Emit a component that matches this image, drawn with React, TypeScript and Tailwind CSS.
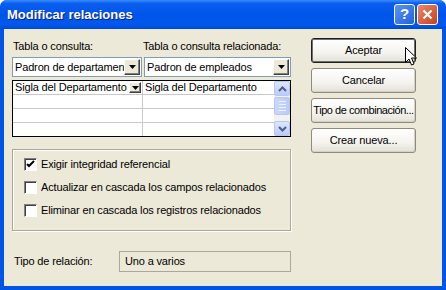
import React from "react";

function DropButton({ small = false }: { small?: boolean }) {
  return (
    <div
      className={`flex shrink-0 items-center justify-center bg-[#ECE9D8] border border-t-white border-l-white border-b-[#404040] border-r-[#404040] shadow-[inset_-1px_-1px_0_#808080] ${
        small ? "w-[12px] h-[11px]" : "w-[16px] h-[16px]"
      }`}
    >
      <svg width="7" height="4" viewBox="0 0 7 4">
        <path d="M0 0h7L3.5 4z" fill="#000" />
      </svg>
    </div>
  );
}

function ScrollBtn({ up }: { up: boolean }) {
  return (
    <div className="flex h-[15px] items-center justify-center rounded-[2px] border border-[#B5C8F5] bg-[linear-gradient(to_bottom,#DCE6FD,#B9CCFA)]">
      <svg width="9" height="6" viewBox="0 0 9 6">
        <path
          d={up ? "M1 5l3.5-3.5L8 5" : "M1 1l3.5 3.5L8 1"}
          fill="none"
          stroke="#4D6185"
          strokeWidth="2"
        />
      </svg>
    </div>
  );
}

function Checkbox({ checked, label }: { checked?: boolean; label: string }) {
  return (
    <div className="flex h-[13px] items-center gap-[4px]">
      <div className="relative h-[13px] w-[13px] border border-t-[#808080] border-l-[#808080] border-b-white border-r-white bg-white shadow-[inset_1px_1px_0_#404040]">
        {checked && (
          <svg className="absolute left-[1px] top-[1px]" width="9" height="9" viewBox="0 0 9 9">
            <path d="M1 4l2 2 5-5" fill="none" stroke="#000" strokeWidth="2" />
          </svg>
        )}
      </div>
      <span className="whitespace-nowrap leading-[13px]">{label}</span>
    </div>
  );
}

function XpButton({ label, isDefault = false }: { label: string; isDefault?: boolean }) {
  return (
    <div
      className={`flex h-[25px] w-[105px] items-center justify-center overflow-hidden whitespace-nowrap rounded-[3px] bg-[linear-gradient(to_bottom,#FFFFFF,#F4F3EE_60%,#E3E0D5)] ${
        isDefault
          ? "border border-[#1F1F1F] shadow-[inset_0_0_0_1px_#6F6F6F]"
          : "border border-[#8E8B7E] shadow-[inset_-1px_-1px_0_#D6D0C5]"
      }`}
    >
      {label}
    </div>
  );
}

export default function App() {
  return (
    <div className="h-[290px] w-[446px] bg-white font-['Liberation_Sans',Arial,sans-serif] text-[11px] tracking-[-0.15px] text-black">
      <div className="flex h-full flex-col overflow-hidden rounded-t-[7px] bg-[#0055E5]">
        {/* Title bar */}
        <div className="flex h-[29px] items-center bg-[linear-gradient(to_bottom,#3A8CFF_0%,#0A5EEE_12%,#0055E8_50%,#0058EE_85%,#0049D2_100%)] pl-[7px] pr-[8px]">
          <span className="text-[13px] font-bold tracking-normal text-white [text-shadow:1px_1px_0_#0A1E8C]">
            Modificar relaciones
          </span>
          <div className="ml-auto flex gap-[2px]">
            <div className="flex h-[21px] w-[21px] items-center justify-center rounded-[3px] border border-white bg-[linear-gradient(135deg,#5A93F5,#2261E0)] text-[15px] font-bold text-white">
              ?
            </div>
            <div className="flex h-[21px] w-[21px] items-center justify-center rounded-[3px] border border-white bg-[linear-gradient(135deg,#E68A6C,#C9401C)]">
              <svg width="11" height="11" viewBox="0 0 11 11">
                <path d="M1.5 1.5l8 8M9.5 1.5l-8 8" stroke="#fff" strokeWidth="2.2" />
              </svg>
            </div>
          </div>
        </div>

        {/* Body */}
        <div className="relative mx-[4px] mb-[4px] flex flex-1 bg-[#ECE9D8]">
          <div className="flex w-[287px] shrink-0 flex-col pl-[8px] pt-[11px]">
            <div className="flex h-[13px] whitespace-nowrap leading-[13px]">
              <span className="w-[131px] pl-[1px]">Tabla o consulta:</span>
              <span>Tabla o consulta relacionada:</span>
            </div>

            <div className="mt-[4px] flex h-[20px]">
              <div className="flex w-[130px] items-center border border-[#7F9DB9] bg-white pl-[2px] pr-[1px]">
                <span className="flex-1 overflow-hidden whitespace-nowrap">Padron de departamen</span>
                <DropButton />
              </div>
              <div className="ml-[2px] flex flex-1 items-center border border-[#7F9DB9] bg-white pl-[2px] pr-[1px]">
                <span className="flex-1 overflow-hidden whitespace-nowrap">Padron de empleados</span>
                <DropButton />
              </div>
            </div>

            <div className="mt-[3px] flex h-[57px] border border-black bg-white">
              <div className="flex w-[130px] flex-col border-r border-[#C8C8C8]">
                <div className="flex h-[14px] items-center border-b border-[#C8C8C8] pl-[2px] pr-[1px]">
                  <span className="flex-1 overflow-hidden whitespace-nowrap">Sigla del Departamento</span>
                  <DropButton small />
                </div>
                <div className="h-[14px] border-b border-[#C8C8C8]" />
                <div className="h-[14px] border-b border-[#C8C8C8]" />
              </div>
              <div className="flex min-w-0 flex-1 flex-col">
                <div className="flex h-[14px] items-center overflow-hidden border-b border-[#C8C8C8] pl-[2px]">
                  <span className="whitespace-nowrap">Sigla del Departamento</span>
                </div>
                <div className="h-[14px] border-b border-[#C8C8C8]" />
                <div className="h-[14px] border-b border-[#C8C8C8]" />
              </div>
              <div className="flex w-[16px] shrink-0 flex-col bg-[#F3F2EC]">
                <ScrollBtn up />
                <div className="mt-[1px] flex h-[18px] flex-col items-center justify-center gap-[2px] rounded-[2px] border border-[#B5C8F5] bg-[linear-gradient(to_right,#CAD8FC,#B8CBF9)]">
                  <div className="h-[1px] w-[7px] bg-[#EEF3FF]" />
                  <div className="h-[1px] w-[7px] bg-[#EEF3FF]" />
                  <div className="h-[1px] w-[7px] bg-[#EEF3FF]" />
                  <div className="h-[1px] w-[7px] bg-[#EEF3FF]" />
                </div>
                <div className="flex-1" />
                <ScrollBtn up={false} />
              </div>
            </div>

            <div className="mt-[12px] flex h-[82px] flex-col gap-[10px] border border-[#ACA899] pl-[11px] pt-[8px] shadow-[inset_1px_1px_0_#fff,1px_1px_0_#fff]">
              <Checkbox checked label="Exigir integridad referencial" />
              <Checkbox label="Actualizar en cascada los campos relacionados" />
              <Checkbox label="Eliminar en cascada los registros relacionados" />
            </div>

            <div className="mt-[20px] flex h-[21px] items-center">
              <span className="w-[107px] whitespace-nowrap pl-[2px]">Tipo de relación:</span>
              <div className="flex h-full flex-1 items-center border border-[#ACA899] pl-[5px]">
                Uno a varios
              </div>
            </div>
          </div>

          <div className="ml-[20px] flex flex-col gap-[5px] pt-[9px]">
            <XpButton label="Aceptar" isDefault />
            <XpButton label="Cancelar" />
            <div className="tracking-[-0.45px]">
              <XpButton label="Tipo de combinación..." />
            </div>
            <XpButton label="Crear nueva..." />
          </div>

          {/* mouse pointer */}
          <svg className="absolute left-[401px] top-[18px]" width="13" height="20" viewBox="0 0 13 20">
            <path
              d="M0.5 0.5v15l3.5-3.5 2.5 6 2.5-1-2.5-6h5z"
              fill="#fff"
              stroke="#000"
              strokeWidth="1"
              strokeLinejoin="round"
            />
          </svg>
        </div>
      </div>
    </div>
  );
}
